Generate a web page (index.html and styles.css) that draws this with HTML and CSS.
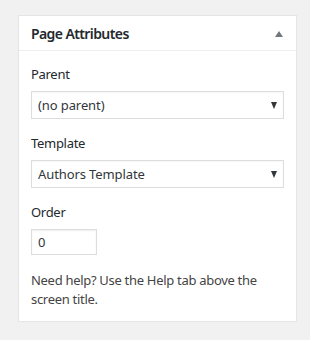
FILE: index.html
```html
<!DOCTYPE html>
<html lang="en">
<head>
    <meta charset="UTF-8">
    <meta name="viewport" content="width=device-width, initial-scale=1.0">
    <title>Page Attributes</title>
    <link rel="stylesheet" href="styles.css">
</head>
<body>
    <div class="postbox">
        <h2 class="hndle">
            <span>Page Attributes</span>
            <span class="toggle"></span>
        </h2>
        <div class="inside">
            <div class="field">
                <label class="field-label" for="parent_id">Parent</label>
                <div class="select-wrap">
                    <select id="parent_id">
                        <option>(no parent)</option>
                    </select>
                </div>
            </div>
            <div class="field">
                <label class="field-label" for="page_template">Template</label>
                <div class="select-wrap">
                    <select id="page_template">
                        <option>Authors Template</option>
                        <option>Default Template</option>
                    </select>
                </div>
            </div>
            <div class="field">
                <label class="field-label" for="menu_order">Order</label>
                <input type="text" id="menu_order" class="order-input" value="0">
            </div>
            <p class="help">Need help? Use the Help tab above the screen title.</p>
        </div>
    </div>
</body>
</html>
```

FILE: styles.css
```css
body {
    margin: 0;
    padding: 15px 0 0 18px;
    background-color: #f1f1f1;
    font-family: "Noto Sans", "Open Sans", sans-serif;
    font-size: 13px;
    letter-spacing: -0.3px;
    color: #444;
}
.postbox {
    width: 277px;
    background: #fff;
    border: 1px solid #e5e5e5;
    box-shadow: 0 1px 1px rgba(0, 0, 0, 0.04);
}
.hndle {
    display: flex;
    justify-content: space-between;
    align-items: center;
    height: 34px;
    margin: 0;
    padding: 0 13px 0 12px;
    border-bottom: 1px solid #eee;
    font-size: 14px;
    font-weight: 600;
    letter-spacing: -0.6px;
    color: #23282d;
}
.toggle {
    width: 0;
    height: 0;
    margin-top: 2px;
    border-left: 4px solid transparent;
    border-right: 4px solid transparent;
    border-bottom: 6px solid #72777c;
}
.inside {
    padding: 14px 12px 12px;
}
.field {
    margin-bottom: 15px;
}
.field-label {
    display: block;
    line-height: 18px;
    margin-bottom: 8px;
    color: #23282d;
}
.select-wrap {
    position: relative;
}
.select-wrap::after {
    content: "";
    position: absolute;
    right: 7px;
    top: 11px;
    border-left: 3.5px solid transparent;
    border-right: 3.5px solid transparent;
    border-top: 7px solid #32373c;
    pointer-events: none;
}
select {
    -webkit-appearance: none;
    appearance: none;
    display: block;
    width: 100%;
    height: 28px;
    padding: 0 24px 0 6px;
    border: 1px solid #ddd;
    border-radius: 0;
    background: #fff;
    font-family: inherit;
    font-size: 13px;
    letter-spacing: -0.1px;
    color: #32373c;
    box-shadow: inset 0 1px 2px rgba(0, 0, 0, 0.04);
}
.order-input {
    display: block;
    box-sizing: border-box;
    width: 66px;
    height: 26px;
    padding: 0 6px;
    border: 1px solid #ddd;
    font-family: inherit;
    font-size: 13px;
    color: #32373c;
    box-shadow: inset 0 1px 2px rgba(0, 0, 0, 0.07);
}
.help {
    margin: 16px 0 0;
    line-height: 19px;
}
```
